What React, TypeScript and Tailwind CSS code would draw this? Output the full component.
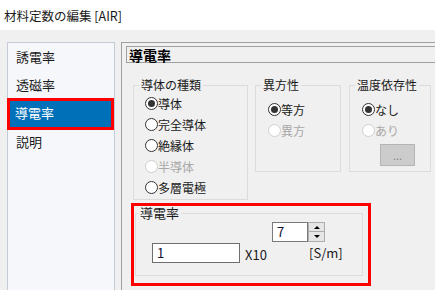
import clsx from 'clsx';

const font = "font-['Noto_Sans_CJK_JP','Noto_Sans_CJK_SC',sans-serif]";

function Radio({ label, checked, disabled }: { label: string; checked?: boolean; disabled?: boolean }) {
  return (
    <div className="flex h-[21px] items-center">
      <span
        className={clsx(
          'flex size-[13px] shrink-0 items-center justify-center rounded-full border bg-white',
          disabled ? 'border-[#cfcfcf]' : 'border-[#333333]'
        )}
      >
        {checked && <span className="size-[7px] rounded-full bg-[#333333]" />}
      </span>
      <span className={clsx('text-[12px] leading-[16px]', disabled ? 'text-[#a8a8a8]' : 'text-[#1a1a1a]')}>{label}</span>
    </div>
  );
}

function Group({ title, className, children }: { title: string; className: string; children: React.ReactNode }) {
  return (
    <fieldset className={clsx('shrink-0 border border-[#dcdcdc]', className)}>
      <legend className="ml-[5px] whitespace-nowrap px-[2px] text-[12px] leading-[16px] text-[#1a1a1a]">{title}</legend>
      {children}
    </fieldset>
  );
}

export default function App() {
  return (
    <div className={clsx('h-[290px] w-[435px] overflow-hidden bg-[#f0f0f0] text-[#1a1a1a]', font)}>
      {/* タイトルバー */}
      <div className="flex h-[30px] items-center bg-white pl-[4px] pt-px text-[12.5px] leading-[16px]">材料定数の編集 [AIR]</div>

      <div className="flex pt-[12px]">
        {/* 左のリスト */}
        <div className="ml-[7px] h-[260px] w-[108px] shrink-0 border border-[#c5cbd9] bg-[#f6f7fa] text-[13px] leading-[16px]">
          <div className="flex h-[28px] items-center pl-[8px]">誘電率</div>
          <div className="flex h-[27px] items-center pl-[8px]">透磁率</div>
          <div className="-ml-px flex h-[32px] items-center border-[3px] border-[#ff0000] bg-[#0070b8] pb-[3px] pl-[5px] text-white">導電率</div>
          <div className="flex h-[24px] items-center pl-[8px]">説明</div>
        </div>

        {/* 右のパネル */}
        <div className="ml-[6px] h-[260px] w-[330px] shrink-0 border-l border-t border-[#a0a0a0] pl-[4px] pt-[3px]">
          <div className="flex h-[17px] items-center border border-[#a0a0a0] pl-[2px] text-[14px] font-bold leading-[16px] text-black">導電率</div>

          <div className="ml-[7px] mt-[14px] flex items-start">
            <Group title="導体の種類" className="h-[123px] w-[115px]">
              <div className="pl-[11px]">
                <Radio label="導体" checked />
                <Radio label="完全導体" />
                <Radio label="絶縁体" />
                <Radio label="半導体" disabled />
                <Radio label="多層電極" />
              </div>
            </Group>
            <Group title="異方性" className="ml-[7px] h-[95px] w-[86px]">
              <div className="pl-[12px] pt-[6px]">
                <Radio label="等方" checked />
                <Radio label="異方" disabled />
              </div>
            </Group>
            <Group title="温度依存性" className="ml-[8px] h-[95px] w-[82px]">
              <div className="pl-[12px] pt-[6px]">
                <Radio label="なし" checked />
                <Radio label="あり" disabled />
                <div className="ml-[18px] mt-[3px] flex h-[22px] w-[35px] items-center justify-center border border-[#b4b4b4] bg-[#cccccc] text-[11px] leading-[12px] text-[#8a8a8a]">...</div>
              </div>
            </Group>
          </div>

          <div className="ml-[5px] mt-[3px] h-[83px] w-[240px] border-[3px] border-[#ff0000]">
            <fieldset className="ml-px h-[70px] w-[228px] border border-[#dcdcdc]">
              <legend className="ml-[2px] whitespace-nowrap px-[2px] text-[13px] leading-[14px]">導電率</legend>
              <div className="pl-[16px]">
                <div className="ml-[120px] mt-[2px] flex">
                  <div className="flex h-[20px] w-[36px] items-center border border-[#7a7a7a] bg-white pl-[4px] text-[13px] leading-[16px] text-[#101030]">7</div>
                  <div className="flex h-[20px] w-[17px] flex-col">
                    <div className="flex h-[10px] items-center justify-center border border-[#acacac] bg-[#e6e6e6]">
                      <span className="h-0 w-0 border-x-[3px] border-b-[3px] border-x-transparent border-b-black" />
                    </div>
                    <div className="flex h-[10px] items-center justify-center border border-t-0 border-[#acacac] bg-[#e6e6e6]">
                      <span className="h-0 w-0 border-x-[3px] border-t-[3px] border-x-transparent border-t-black" />
                    </div>
                  </div>
                </div>
                <div className="mt-px flex items-start">
                  <div className="flex h-[20px] w-[88px] items-center border border-[#6e6e6e] bg-white pl-[4px] text-[13px] leading-[16px] text-[#101030]">1</div>
                  <span className="ml-[5px] mt-[4px] w-[64px] text-[13px] leading-[16px]">X10</span>
                  <span className="mt-[2px] text-[13px] leading-[16px]">[S/m]</span>
                </div>
              </div>
            </fieldset>
          </div>
        </div>
      </div>
    </div>
  );
}
